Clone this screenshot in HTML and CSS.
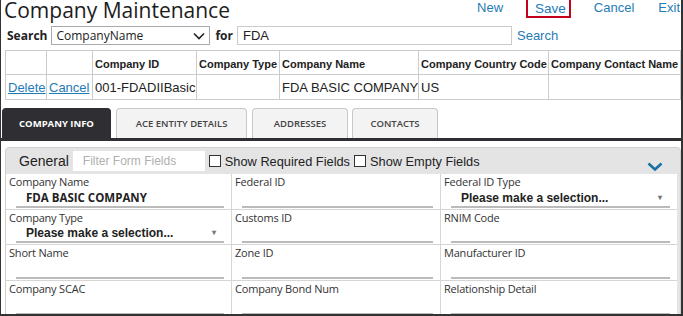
FILE: index.html
```html
<!DOCTYPE html>
<html>
<head>
<meta charset="utf-8">
<link rel="stylesheet" href="styles.css">
</head>
<body>
<div class="frame">
  <div class="topbar">
    <h1 class="title">Company Maintenance</h1>
    <nav class="actions">
      <a class="act act-new">New</a>
      <a class="act act-save">Save</a>
      <a class="act act-cancel">Cancel</a>
      <a class="act act-exit">Exit</a>
    </nav>
  </div>
  <div class="searchrow">
    <span class="lbl">Search</span>
    <div class="select"><span>CompanyName</span>
      <svg class="caret" width="12" height="8" viewBox="0 0 12 8"><path d="M1 1.5 L6 6.5 L11 1.5" fill="none" stroke="#222" stroke-width="1.6"/></svg>
    </div>
    <span class="lbl">for</span>
    <div class="textbox">FDA</div>
    <a class="searchlink">Search</a>
  </div>
  <table class="results">
    <colgroup>
      <col style="width:41px"><col style="width:46px"><col style="width:104px"><col style="width:83px"><col style="width:139px"><col style="width:130px"><col style="width:132px">
    </colgroup>
    <tr class="hdr"><th></th><th></th><th>Company ID</th><th>Company Type</th><th>Company Name</th><th>Company Country Code</th><th>Company Contact Name</th></tr>
    <tr class="row"><td><a>Delete</a></td><td><a>Cancel</a></td><td>001-FDADIIBasic</td><td></td><td>FDA BASIC COMPANY</td><td>US</td><td></td></tr>
  </table>
  <div class="tabs">
    <div class="tab active">COMPANY INFO</div>
    <div class="tab t2">ACE ENTITY DETAILS</div>
    <div class="tab t3">ADDRESSES</div>
    <div class="tab t4">CONTACTS</div>
  </div>
  <div class="panel">
    <div class="panelhead">
      <span class="gen">General</span>
      <div class="filter">Filter Form Fields</div>
      <span class="chk"></span><span class="chklbl">Show Required Fields</span>
      <span class="chk"></span><span class="chklbl">Show Empty Fields</span>
      <svg class="chev" width="16" height="10" viewBox="0 0 16 10"><path d="M1.5 1.5 L8 7.5 L14.5 1.5" fill="none" stroke="#1a6fa8" stroke-width="2.6"/></svg>
    </div>
    <div class="grid">
      <div class="cell"><div class="flabel">Company Name</div><div class="field val">FDA BASIC COMPANY</div></div>
      <div class="cell"><div class="flabel">Federal ID</div><div class="field"></div></div>
      <div class="cell"><div class="flabel">Federal ID Type</div><div class="field sel"><span>Please make a selection...</span><i class="dd">&#9662;</i></div></div>
      <div class="cell"><div class="flabel">Company Type</div><div class="field sel"><span>Please make a selection...</span><i class="dd">&#9662;</i></div></div>
      <div class="cell"><div class="flabel">Customs ID</div><div class="field"></div></div>
      <div class="cell"><div class="flabel">RNIM Code</div><div class="field"></div></div>
      <div class="cell"><div class="flabel">Short Name</div><div class="field"></div></div>
      <div class="cell"><div class="flabel">Zone ID</div><div class="field"></div></div>
      <div class="cell"><div class="flabel">Manufacturer ID</div><div class="field"></div></div>
      <div class="cell"><div class="flabel">Company SCAC</div><div class="field"></div></div>
      <div class="cell"><div class="flabel">Company Bond Num</div><div class="field"></div></div>
      <div class="cell"><div class="flabel">Relationship Detail</div><div class="field"></div></div>
    </div>
  </div>
</div>
</body>
</html>
```
FILE: styles.css
```css
* { box-sizing: border-box; }
html, body { margin: 0; padding: 0; background: #fff; }
body { font-family: "Open Sans", "Liberation Sans", sans-serif; color: #222; overflow: hidden; }
.frame {
  width: 683px; height: 316px; overflow: hidden;
  border-left: 1px solid #333; border-right: 2px solid #333; border-bottom: 2px solid #333;
}
.topbar { display: flex; align-items: flex-start; height: 24px; }
.title { margin: 0 0 0 3px; font-weight: 400; font-size: 21px; line-height: 20px; height: 24px; color: #1c1c1c; }
.actions { margin-left: auto; display: flex; font-family: "Liberation Sans", Arial, sans-serif; font-size: 13px; }
.act { color: #1f7bb6; line-height: 17px; height: 18px; }
.act-new { margin-right: 23px; margin-top: -1px; }
.act-save { border: 2px solid #c4001a; padding: 0 3px 0 7px; margin-right: 23px; margin-top: -2px; height: 20px; font-size: 13.5px; }
.act-cancel { margin-right: 24px; margin-top: -1px; }
.act-exit { margin-right: 1px; margin-top: -1px; }

.searchrow { display: flex; align-items: center; height: 21px; margin-top: 1px; padding-left: 6px; }
.lbl { font-weight: 700; font-size: 12px; }
.select { width: 159px; height: 19px; border: 1px solid #aaa; margin: 0 5px 0 4px; display: flex; align-items: center; justify-content: space-between; padding: 0 4px 0 4px; font-size: 12px; }
.textbox { width: 275px; height: 19px; border: 1px solid #ccc; margin-left: 4px; font-family: "Liberation Sans", Arial, sans-serif; font-size: 13px; padding: 1px 5px; line-height: 15px; }
.searchlink { color: #1f7bb6; font-family: "Liberation Sans", Arial, sans-serif; font-size: 13px; margin-left: 5px; }

.results { border-collapse: collapse; margin: 4px 0 0 4px; table-layout: fixed; width: 675px; font-family: "Liberation Sans", Arial, sans-serif; }
.results th, .results td { border: 1px solid #ccc; padding: 0 2px; white-space: nowrap; overflow: hidden; text-align: left; }
.results th { height: 24px; font-size: 11px; font-weight: 700; color: #222; padding-top: 2px; }
.results td { height: 25px; font-size: 13px; color: #222; }
.results td a { color: #1f7bb6; text-decoration: underline; }

.tabs { display: flex; align-items: flex-end; margin-top: 8px; padding-left: 1px; height: 33px; border-bottom: 3px solid #2f2f33; }
.tab {
  height: 30px; border: 1px solid #c8c8c8; border-bottom: none; border-radius: 4px 4px 0 0;
  background: #f3f3f3; color: #444; font-size: 9.5px; font-weight: 600;
  display: flex; align-items: center; justify-content: center; margin-right: 5px;
}
.tab.active { width: 109px; background: #2f2f33; border-color: #2f2f33; color: #fff; font-weight: 700; margin-right: 5px; }
.tab.t2 { width: 131px; }
.tab.t3 { width: 96px; margin-right: 4px; }
.tab.t4 { width: 86px; }

.panel { margin: 6px 0 0 4px; width: 676px; background: #e4e4e4; border: 1px solid #d0d0d0; border-radius: 4px 4px 0 0; padding: 0 3px 0 0; }
.panelhead { height: 26px; display: flex; align-items: center; font-family: "Liberation Sans", Arial, sans-serif; }
.gen { font-size: 14px; margin-left: 13px; color: #222; }
.filter { width: 132px; height: 20px; background: #fff; margin-left: 4px; color: #b0b0b0; font-size: 12px; padding: 3px 0 0 10px; }
.chk { width: 12px; height: 12px; border: 1px solid #333; background: #fff; margin-left: 4px; margin-right: 4px; }
.chklbl { font-size: 12.8px; color: #222; }
.chev { margin-left: auto; margin-right: 14px; margin-top: 11px; }

.grid { display: grid; grid-template-columns: 226px 209px 236px; grid-template-rows: 36px 35px 36px 36px; background: #fff; }
.cell { border-right: 1px solid #d6d6d6; border-bottom: 1px solid #d6d6d6; padding: 1px 0 0 3px; display: flex; flex-direction: column; }
.cell:nth-child(3n) { border-right: none; }
.flabel { font-size: 11px; color: #333; line-height: 13px; font-family: "Open Sans", sans-serif; letter-spacing: -0.2px; }
.field { margin: auto 7px 1px 7px; height: 19px; border-bottom: 2px solid #bbb; font-size: 12px; font-weight: 700; padding-left: 10px; display: flex; align-items: center; justify-content: space-between; }
.field.val { font-family: "Open Sans", sans-serif; font-size: 11.5px; }
.field.sel { font-family: "Liberation Sans", Arial, sans-serif; font-size: 12px; color: #222; }
.dd { font-style: normal; font-size: 8px; color: #777; margin-right: 8px; }
```
